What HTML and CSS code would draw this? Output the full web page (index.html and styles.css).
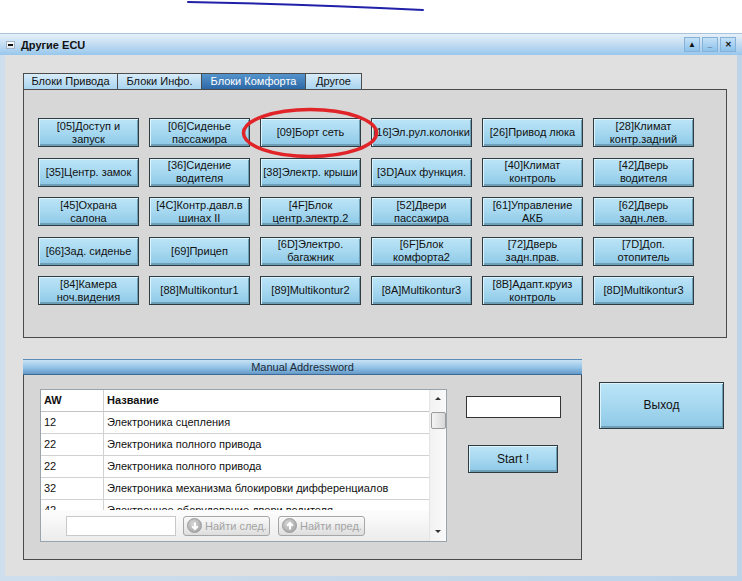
FILE: index.html
```html
<!DOCTYPE html>
<html lang="ru">
<head>
<meta charset="utf-8">
<title>Другие ECU</title>
<link rel="stylesheet" href="styles.css">
</head>
<body>
<div class="top">
  <svg class="scribble" width="742" height="33" viewBox="0 0 742 33"><path d="M188 2 Q300 4 423 10" stroke="#2020a8" stroke-width="2" fill="none" stroke-linecap="round"/></svg>
</div>
<div class="window">
  <div class="titlebar">
    <span class="sysbtn"></span>
    <span class="title">Другие ECU</span>
    <div class="ctrls">
      <span class="cbtn">▲</span>
      <span class="cbtn">_</span>
      <span class="cbtn">✕</span>
    </div>
  </div>
  <div class="frame">
    <div class="client">
      <div class="tabs">
        <div class="tab t1">Блоки Привода</div>
        <div class="tab t2">Блоки Инфо.</div>
        <div class="tab t3 active">Блоки Комфорта</div>
        <div class="tab t4">Другое</div>
      </div>
      <div class="panel">
        <div class="grid">
          <div class="ecu"><span>[05]Доступ и</span><span>запуск</span></div>
          <div class="ecu"><span>[06]Сиденье</span><span>пассажира</span></div>
          <div class="ecu"><span>[09]Борт сеть</span></div>
          <div class="ecu"><span>[16]Эл.рул.колонки</span></div>
          <div class="ecu"><span>[26]Привод люка</span></div>
          <div class="ecu"><span>[28]Климат</span><span>контр.задний</span></div>

          <div class="ecu"><span>[35]Центр. замок</span></div>
          <div class="ecu"><span>[36]Сидение</span><span>водителя</span></div>
          <div class="ecu"><span>[38]Электр. крыши</span></div>
          <div class="ecu"><span>[3D]Aux функция.</span></div>
          <div class="ecu"><span>[40]Климат</span><span>контроль</span></div>
          <div class="ecu"><span>[42]Дверь</span><span>водителя</span></div>

          <div class="ecu"><span>[45]Охрана</span><span>салона</span></div>
          <div class="ecu"><span>[4C]Контр.давл.в</span><span>шинах II</span></div>
          <div class="ecu"><span>[4F]Блок</span><span>центр.электр.2</span></div>
          <div class="ecu"><span>[52]Двери</span><span>пассажира</span></div>
          <div class="ecu"><span>[61]Управление</span><span>АКБ</span></div>
          <div class="ecu"><span>[62]Дверь</span><span>задн.лев.</span></div>

          <div class="ecu"><span>[66]Зад. сиденье</span></div>
          <div class="ecu"><span>[69]Прицеп</span></div>
          <div class="ecu"><span>[6D]Электро.</span><span>багажник</span></div>
          <div class="ecu"><span>[6F]Блок</span><span>комфорта2</span></div>
          <div class="ecu"><span>[72]Дверь</span><span>задн.прав.</span></div>
          <div class="ecu"><span>[7D]Доп.</span><span>отопитель</span></div>

          <div class="ecu"><span>[84]Камера</span><span>ноч.видения</span></div>
          <div class="ecu"><span>[88]Multikontur1</span></div>
          <div class="ecu"><span>[89]Multikontur2</span></div>
          <div class="ecu"><span>[8A]Multikontur3</span></div>
          <div class="ecu"><span>[8B]Адапт.круиз</span><span>контроль</span></div>
          <div class="ecu"><span>[8D]Multikontur3</span></div>
        </div>
        <svg class="circle" width="140" height="54" viewBox="0 0 140 54"><ellipse cx="70" cy="27" rx="66.5" ry="23.5" fill="none" stroke="#e02428" stroke-width="3.5"/></svg>
      </div>

      <div class="lower">
        <div class="group">
          <div class="group-head">Manual Addressword</div>
          <div class="group-body">
            <div class="tbl">
              <div class="tmain">
                <div class="rows">
                  <div class="row head"><div class="c1">AW</div><div class="c2">Название</div></div>
                  <div class="row"><div class="c1">12</div><div class="c2">Электроника сцепления</div></div>
                  <div class="row"><div class="c1">22</div><div class="c2">Электроника полного привода</div></div>
                  <div class="row"><div class="c1">22</div><div class="c2">Электроника полного привода</div></div>
                  <div class="row"><div class="c1">32</div><div class="c2">Электроника механизма блокировки дифференциалов</div></div>
                  <div class="row"><div class="c1">42</div><div class="c2">Электронное оборудование двери водителя</div></div>
                </div>
                <div class="finder">
                  <div class="finput"></div>
                  <div class="fbtn"><span class="ficon"><svg width="12" height="12" viewBox="0 0 12 12"><path d="M6 2.5 V9 M3.2 6.2 L6 9 L8.8 6.2" stroke="#fff" stroke-width="2" fill="none"/></svg></span>Найти след.</div>
                  <div class="fbtn"><span class="ficon"><svg width="12" height="12" viewBox="0 0 12 12"><path d="M6 9.5 V3 M3.2 5.8 L6 3 L8.8 5.8" stroke="#fff" stroke-width="2" fill="none"/></svg></span>Найти пред.</div>
                </div>
              </div>
              <div class="vscroll">
                <span class="arr up"></span>
                <span class="thumb"></span>
                <span class="arr down"></span>
              </div>
            </div>
            <div class="side">
              <div class="aw-input"></div>
              <div class="btn start"><span>Start !</span></div>
            </div>
          </div>
        </div>
        <div class="btn exit"><span>Выход</span></div>
      </div>
    </div>
  </div>
</div>
</body>
</html>
```
FILE: styles.css
```css
html, body {
  margin: 0;
  padding: 0;
}
body {
  width: 742px;
  height: 581px;
  overflow: hidden;
  background: #ffffff;
  font-family: "Liberation Sans", Arial, sans-serif;
  font-size: 11px;
  color: #111;
}
.top {
  height: 33px;
}
.scribble {
  display: block;
}
.window {
  height: 548px;
  display: flex;
  flex-direction: column;
}
.titlebar {
  flex: none;
  height: 22px;
  box-sizing: border-box;
  display: flex;
  align-items: center;
  padding-left: 6px;
  border-top: 1px solid #a9c3da;
  background: linear-gradient(#e6f0f9 0%, #c6def2 45%, #98c7ec 100%);
}
.sysbtn {
  width: 9px;
  height: 8px;
  box-sizing: border-box;
  background: linear-gradient(#ffffff, #dfe8f0);
  border: 1px solid #9fb3c6;
  display: flex;
  align-items: center;
  justify-content: center;
}
.sysbtn::after {
  content: "";
  width: 5px;
  height: 2px;
  background: #111;
}
.title {
  margin-left: 6px;
  font-weight: bold;
  font-size: 11px;
  color: #121212;
}
.ctrls {
  margin-left: auto;
  margin-right: 6px;
  display: flex;
  gap: 2px;
}
.cbtn {
  width: 16px;
  height: 15px;
  box-sizing: border-box;
  display: flex;
  align-items: center;
  justify-content: center;
  background: linear-gradient(#c4e1f7, #8cc2ec);
  border: 1px solid #86b2d8;
  font-size: 8px;
  font-weight: bold;
  color: #111;
}
.frame {
  flex: 1;
  display: flex;
  padding: 0 5px 5px 5px;
  background: linear-gradient(90deg, #cfdeec, #bcd3e8);
}
.client {
  flex: 1;
  background: #e0e0e0;
  padding: 18px 0 0 18px;
  box-sizing: border-box;
}
.tabs {
  display: flex;
  height: 16px;
}
.tab {
  height: 16px;
  box-sizing: border-box;
  border: 1px solid #4d4d4d;
  border-bottom: none;
  background: linear-gradient(#d8ecf9, #a9d4f0);
  text-align: center;
  line-height: 15px;
  font-size: 11px;
  color: #111;
}
.tab + .tab {
  margin-left: -1px;
}
.t1 { width: 95px; }
.t2 { width: 85px; }
.t3 { width: 105px; }
.t4 { width: 57px; }
.tab.active {
  background: linear-gradient(#5594cd, #2c68a6);
  color: #fff;
}
.panel {
  position: relative;
  width: 704px;
  height: 249px;
  box-sizing: border-box;
  border: 1px solid #4a4a4a;
  background: #d7d7d7;
  padding: 28px 0 0 14px;
}
.grid {
  display: grid;
  grid-template-columns: repeat(6, 101px);
  grid-auto-rows: 29px;
  column-gap: 10px;
  row-gap: 10.5px;
}
.ecu, .btn {
  box-sizing: border-box;
  display: flex;
  flex-direction: column;
  align-items: center;
  justify-content: center;
  overflow: hidden;
  border: 1px solid #2d3c43;
  box-shadow: inset 1px 1px 0 #dff3fc, inset -1px -2px 0 #6f9fb7;
  background: linear-gradient(#bce4f7 0%, #a6d8f0 50%, #8dc8e6 100%);
  color: #111;
  font-size: 11px;
  line-height: 13px;
}
.ecu span, .btn span {
  display: block;
  flex: none;
  white-space: nowrap;
}
.circle {
  position: absolute;
  left: 216px;
  top: 16px;
}
.lower {
  display: flex;
  align-items: flex-start;
  margin-top: 21px;
}
.group {
  width: 559px;
  height: 201px;
  box-sizing: border-box;
  border: 1px solid #4a4a4a;
  border-top: none;
  background: #d6d6d6;
}
.group-head {
  height: 16px;
  margin: 0 -1px;
  box-sizing: border-box;
  border-top: 1px solid #5b8cba;
  border-bottom: 1px solid #3d6b95;
  background: linear-gradient(#c9e2f5 0%, #92c2e6 55%, #6399c8 100%);
  text-align: center;
  line-height: 14px;
  font-size: 11px;
  color: #1c2a38;
}
.group-body {
  display: flex;
  align-items: flex-start;
  padding: 14px 0 0 16px;
}
.tbl {
  display: flex;
  width: 407px;
  height: 153px;
  box-sizing: border-box;
  border: 1px solid #9aa4ad;
  background: #fff;
}
.tmain {
  width: 388px;
  display: flex;
  flex-direction: column;
}
.rows {
  height: 120px;
  overflow: hidden;
}
.row {
  display: flex;
  height: 22px;
  box-sizing: border-box;
  border-bottom: 1px solid #d2d2d2;
  line-height: 21px;
  font-size: 11px;
  color: #111;
}
.row.head {
  font-weight: bold;
  border-bottom-color: #c4c4c4;
}
.c1 {
  width: 63px;
  flex: none;
  padding-left: 3px;
  box-sizing: border-box;
  border-right: 1px solid #d2d2d2;
}
.c2 {
  flex: 1;
  padding-left: 3px;
  white-space: nowrap;
  overflow: hidden;
}
.finder {
  flex: 1;
  display: flex;
  align-items: center;
  gap: 7px;
  padding-left: 25px;
  background: linear-gradient(#fdfdfd, #ececec);
}
.finput {
  width: 110px;
  height: 20px;
  box-sizing: border-box;
  border: 1px solid #c9c9c9;
  background: #fff;
}
.fbtn {
  width: 87px;
  height: 20px;
  box-sizing: border-box;
  border: 1px solid #a6a6a6;
  border-radius: 3px;
  background: linear-gradient(#fafafa, #dedede);
  display: flex;
  align-items: center;
  gap: 3px;
  padding-left: 3px;
  color: #a3a3a3;
  font-size: 11px;
  white-space: nowrap;
}
.fbtn + .fbtn {
  margin-left: 1px;
}
.ficon {
  width: 15px;
  height: 15px;
  flex: none;
  border-radius: 50%;
  background: radial-gradient(circle at 40% 35%, #d6d6d6, #9c9c9c);
  border: 1px solid #9a9a9a;
  box-sizing: border-box;
  display: flex;
  align-items: center;
  justify-content: center;
}
.ficon svg {
  display: block;
  flex: none;
}
.vscroll {
  flex: 1;
  position: relative;
  display: flex;
  flex-direction: column;
  align-items: center;
  background: linear-gradient(90deg, #f2f2f2, #fafafa);
  border-left: 1px solid #e4e4e4;
}
.arr {
  width: 0;
  height: 0;
  border-left: 3px solid transparent;
  border-right: 3px solid transparent;
}
.arr.up {
  margin-top: 7px;
  border-bottom: 3px solid #333;
}
.thumb {
  margin-top: 12px;
  width: 15px;
  height: 17px;
  box-sizing: border-box;
  border: 1px solid #9c9c9c;
  border-radius: 2px;
  background: linear-gradient(90deg, #f4f4f4, #d8d8d8);
}
.arr.down {
  margin-top: auto;
  margin-bottom: 8px;
  border-top: 3px solid #333;
}
.side {
  display: flex;
  flex-direction: column;
  margin-left: 19px;
  padding-top: 7px;
}
.aw-input {
  width: 95px;
  height: 22px;
  box-sizing: border-box;
  border: 1px solid #333;
  background: #fff;
}
.btn.start {
  width: 90px;
  height: 28px;
  margin-top: 27px;
  margin-left: 2px;
  font-size: 12px;
}
.btn.exit {
  width: 125px;
  height: 47px;
  margin-left: 17px;
  margin-top: 23px;
  font-size: 12px;
}
```
